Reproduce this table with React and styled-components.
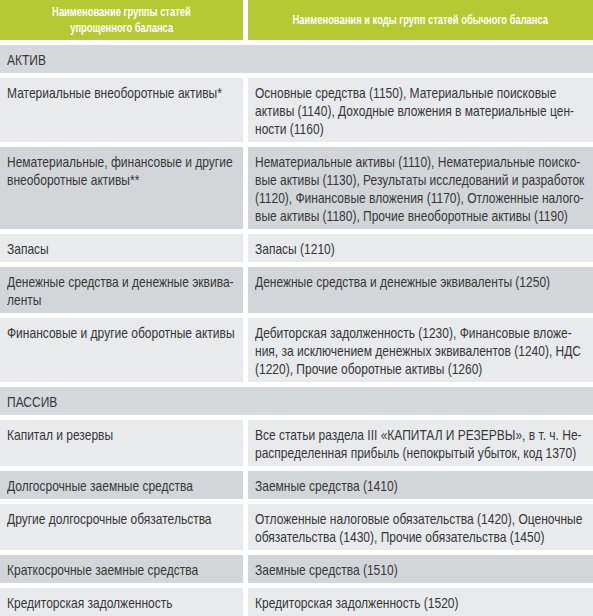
import React from 'react';
import styled, { createGlobalStyle } from 'styled-components';

const Global = createGlobalStyle`
  html, body { margin: 0; padding: 0; background: #ffffff; overflow: hidden; }
  body { font-family: "Liberation Sans", Arial, sans-serif; }
`;

const Table = styled.div`
  width: 593px;
  display: grid;
  grid-template-columns: 243px 1fr;
  column-gap: 5px;
  row-gap: 5px;
  background: #ffffff;
`;

const Head = styled.div`
  background: #b5c933;
  color: #ffffff;
  font-weight: bold;
  font-size: 12.5px;
  line-height: 16px;
  height: 40px;
  display: flex;
  flex-direction: column;
  align-items: center;
  justify-content: center;
  text-align: center;
  overflow: hidden;
`;

/* the reference uses a condensed face; squeeze a regular one */
const Narrow = styled.span`
  display: block;
  white-space: nowrap;
  transform: scaleX(${p => p.$scale || 0.8});
  transform-origin: ${p => (p.$center ? '50% 0' : '0 0')};
`;

const Section = styled.div`
  grid-column: 1 / -1;
  background: #d6d9dc;
  color: #363636;
  font-size: 15px;
  line-height: 18px;
  padding: 6px 7px 4px;
  overflow: hidden;
`;

const Cell = styled.div`
  background: ${p => (p.$dark ? '#d3d6d9' : '#e8eaec')};
  color: #363636;
  font-size: 15px;
  line-height: 18px;
  padding: 6px 7px 4px;
  overflow: hidden;
`;

const rows = [
  { section: 'АКТИВ' },
  {
    name: ['Материальные внеоборотные активы*'],
    codes: ['Основные средства (1150), Материальные поисковые', 'активы (1140), Доходные вложения в материальные цен-', 'ности (1160)'],
  },
  {
    name: ['Нематериальные, финансовые и другие', 'внеоборотные активы**'],
    codes: ['Нематериальные активы (1110), Нематериальные поиско-', 'вые активы (1130), Результаты исследований и разработок', '(1120), Финансовые вложения (1170), Отложенные налого-', 'вые активы (1180), Прочие внеоборотные активы (1190)'],
  },
  { name: ['Запасы'], codes: ['Запасы (1210)'] },
  {
    name: ['Денежные средства и денежные эквива-', 'ленты'],
    codes: ['Денежные средства и денежные эквиваленты (1250)'],
  },
  {
    name: ['Финансовые и другие оборотные активы'],
    codes: ['Дебиторская задолженность (1230), Финансовые вложе-', 'ния, за исключением денежных эквивалентов (1240), НДС', '(1220), Прочие оборотные активы (1260)'],
  },
  { section: 'ПАССИВ' },
  {
    name: ['Капитал и резервы'],
    codes: ['Все статьи раздела III «КАПИТАЛ И РЕЗЕРВЫ», в т. ч. Не-', 'распределенная прибыль (непокрытый убыток, код 1370)'],
  },
  { name: ['Долгосрочные заемные средства'], codes: ['Заемные средства (1410)'] },
  {
    name: ['Другие долгосрочные обязательства'],
    codes: ['Отложенные налоговые обязательства (1420), Оценочные', 'обязательства (1430), Прочие обязательства (1450)'],
  },
  { name: ['Краткосрочные заемные средства'], codes: ['Заемные средства (1510)'] },
  { name: ['Кредиторская задолженность'], codes: ['Кредиторская задолженность (1520)'] },
];

const Lines = ({ items }) => items.map((t, i) => <Narrow key={i}>{t}</Narrow>);

const App = () => {
  let n = 0;
  return (
    <>
      <Global />
      <Table>
        <Head>
          <Narrow $center $scale={0.75}>Наименование группы статей</Narrow>
          <Narrow $center $scale={0.75}>упрощенного баланса</Narrow>
        </Head>
        <Head>
          <Narrow $center $scale={0.75}>Наименования и коды групп статей обычного баланса</Narrow>
        </Head>
        {rows.map((r, i) => {
          if (r.section) {
            n = 0;
            return (
              <Section key={i}>
                <Narrow>{r.section}</Narrow>
              </Section>
            );
          }
          const dark = n % 2 === 1;
          n += 1;
          return (
            <React.Fragment key={i}>
              <Cell $dark={dark}>
                <Lines items={r.name} />
              </Cell>
              <Cell $dark={dark}>
                <Lines items={r.codes} />
              </Cell>
            </React.Fragment>
          );
        })}
      </Table>
    </>
  );
};

export default App;
